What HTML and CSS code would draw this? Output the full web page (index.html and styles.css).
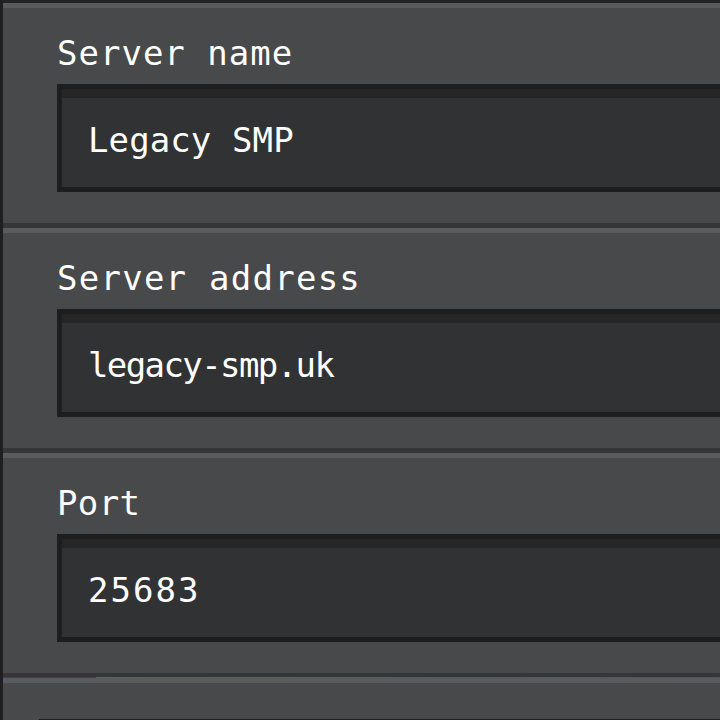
FILE: index.html
```html
<!DOCTYPE html>
<html lang="en">
<head>
<meta charset="utf-8">
<title>Edit server</title>
<link rel="stylesheet" href="styles.css">
</head>
<body>
<div class="screen">
  <section class="group group-first">
    <div class="sep"><div class="sep-dark"></div><div class="sep-light"></div></div>
    <div class="panel">
      <div class="label">Server name</div>
      <div class="field"><span class="value value-name">Legacy SMP</span></div>
    </div>
  </section>
  <section class="group">
    <div class="sep"><div class="sep-dark"></div><div class="sep-light"></div></div>
    <div class="panel">
      <div class="label label-wide">Server address</div>
      <div class="field"><span class="value value-address">legacy-smp.uk</span></div>
    </div>
  </section>
  <section class="group">
    <div class="sep"><div class="sep-dark"></div><div class="sep-light"></div></div>
    <div class="panel">
      <div class="label label-tight">Port</div>
      <div class="field"><span class="value value-port">25683</span></div>
    </div>
  </section>
  <section class="group group-last">
    <div class="sep"><div class="sep-dark sep-progress"></div><div class="sep-light"></div></div>
    <div class="panel panel-tail">
      <div class="tail-edge"></div>
    </div>
  </section>
</div>
</body>
</html>
```
FILE: styles.css
```css
html, body {
  margin: 0;
  padding: 0;
  width: 720px;
  height: 720px;
  overflow: hidden;
  background: #48494a;
}

.screen {
  margin-top: -2px;
  border-left: 3px solid #1f1f20;
  display: flex;
  flex-direction: column;
  font-family: "DejaVu Sans Mono", "Liberation Mono", monospace;
  color: #ffffff;
}

.group {
  display: flex;
  flex-direction: column;
}

.sep {
  display: flex;
  flex-direction: column;
}

.sep-dark {
  height: 5px;
  background: #353637;
}

.group-first .sep-dark {
  background: #232324;
}

.sep-progress {
  background:
    linear-gradient(to right, #9b1b1b 0, #9b1b1b 93px, #55702b 93px, #4c5e35 100%) left bottom / 100% 1px no-repeat,
    #353637;
}

.sep-light {
  height: 5px;
  background: #5a5b5c;
}

.panel {
  height: 215px;
  box-sizing: border-box;
  padding: 28px 0 0 54px;
  background: #48494a;
  display: flex;
  flex-direction: column;
  gap: 14px;
}

.label {
  font-size: 34px;
  line-height: 34px;
  letter-spacing: 1px;
  white-space: nowrap;
}

.label-wide {
  letter-spacing: 1.25px;
}

.label-tight {
  letter-spacing: 0.4px;
}

.field {
  height: 108px;
  box-sizing: border-box;
  margin-right: -40px;
  border: 5px solid #1e1e1f;
  background: #313233;
  box-shadow: inset 0 9px 0 #262627;
  padding: 34px 0 0 26px;
}

.value {
  display: block;
  font-size: 34px;
  line-height: 34px;
  letter-spacing: 1px;
  white-space: nowrap;
}

.value-name {
  letter-spacing: 0.1px;
}

.value-address {
  letter-spacing: -1.6px;
}

.value-port {
  letter-spacing: 2px;
}

.panel-tail {
  padding: 36px 0 0 36px;
}

.tail-edge {
  height: 4px;
  background: #1e1e1f;
}
```
